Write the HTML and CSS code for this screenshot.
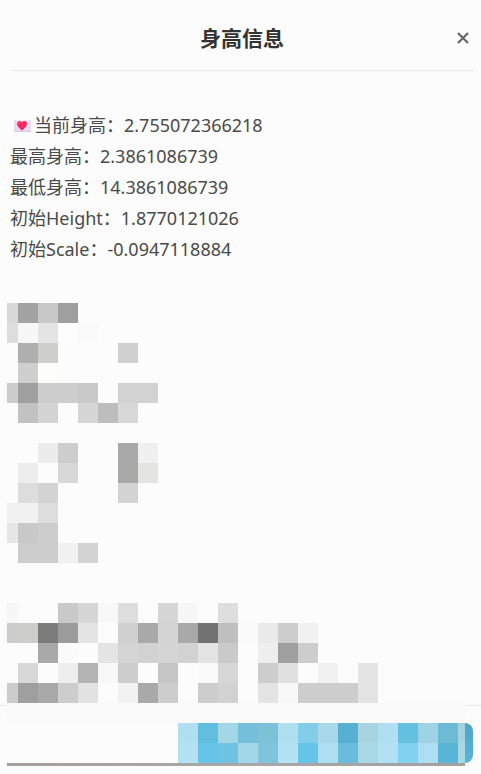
FILE: index.html
```html
<!DOCTYPE html>
<html lang="zh-CN">
<head>
    <meta charset="UTF-8">
    <meta name="viewport" content="width=device-width, initial-scale=1">
    <title>身高信息</title>
    <link rel="stylesheet" href="styles.css">
</head>
<body>
    <div class="dialog">
        <header class="dialog-header">
            <h1>身高信息</h1>
            <button type="button" class="close">
                <svg width="12" height="12" viewBox="0 0 12 12" aria-hidden="true">
                    <path d="M1 1L11 11M11 1L1 11" fill="none" stroke="#666" stroke-width="2.200"/>
                </svg>
            </button>
        </header>

        <main class="dialog-body">
            <div class="info">
                <p>
                    <svg class="letter" width="17" height="12" viewBox="0 0 17 12" aria-hidden="true">
                        <rect width="17" height="12" fill="#e6daf3"/>
                        <path d="M0 0H17L8.500 8Z" fill="#efe6f8"/>
                        <path d="M0 11.500H17" stroke="#d8c8e6"/>
                        <path d="M8 10.500C5 8 3 6 3 3.700C3 1 6.500 0 8 2.500C9.500 0 13 1 13 3.700C13 6 11 8 8 10.500Z" fill="#f8285f"/>
                        <path d="M4.500 3.500C4.700 2.400 5.600 2 6.400 2.500" fill="none" stroke="#ff7d9c"/>
                    </svg>
                    当前身高：2.755072366218
                </p>
                <p>最高身高：2.3861086739</p>
                <p>最低身高：14.3861086739</p>
                <p>初始Height：1.8770121026</p>
                <p>初始Scale：-0.0947118884</p>
            </div>

            <svg class="mosaic" data-name="first" aria-hidden="true"></svg>
            <svg class="mosaic" data-name="second" aria-hidden="true"></svg>
            <svg class="mosaic mosaic-last" data-name="third" aria-hidden="true"></svg>
        </main>

        <footer class="dialog-footer">
            <button type="button" class="confirm">
                <svg class="mosaic" data-name="button" aria-hidden="true"></svg>
            </button>
            <div class="bar"></div>
        </footer>
    </div>

    <script src="script.js"></script>
</body>
</html>
```
FILE: styles.css
```css
* {
    box-sizing: border-box;
}
body {
    margin: 0;
    background: #fcfcfc;
    color: #4a4a4a;
    font-family: "Noto Sans", "Noto Sans CJK SC", sans-serif;
}
button {
    padding: 0;
    border: none;
    background: none;
    cursor: pointer;
}
.dialog-header {
    position: relative;
    display: flex;
    align-items: center;
    justify-content: center;
    height: 71px;
    margin: 0 8px 0 11px;
    padding-top: 6px;
    border-bottom: 1px solid #e8e8e8;
}
h1 {
    margin: 0;
    color: #333;
    font-size: 21px;
    line-height: 30px;
    font-weight: 700;
}
.close {
    position: absolute;
    top: 32px;
    right: 4px;
    width: 12px;
    height: 12px;
}
.close svg {
    display: block;
}
.dialog-body {
    padding: 39px 7px 0;
}
.info {
    margin-bottom: 38px;
    padding-left: 3px;
    font-size: 18px;
    line-height: 31px;
}
.info p {
    display: flex;
    align-items: center;
    gap: 3px;
    height: 31px;
    margin: 0;
}
.letter {
    margin-left: 4px;
}
.mosaic {
    display: block;
    margin-bottom: 20px;
    shape-rendering: crispEdges;
}
.mosaic-last {
    margin: 40px 0 0;
}
.dialog-footer {
    position: relative;
    margin-top: 2px;
    padding: 17px 8px 8px 7px;
    border-top: 1px solid #e8e8e8;
}
/* covers the border line in the middle */
.dialog-footer::before {
    content: "";
    position: absolute;
    top: -3px;
    left: 7px;
    right: 16px;
    height: 20px;
    background: #fafafa;
}
.confirm {
    display: block;
    width: 295px;
    height: 40px;
    margin-left: auto;
    border-radius: 0 8px 8px 0;
    background: linear-gradient(#4da7c4, #57b5d7);
    overflow: hidden;
}
.confirm .mosaic {
    margin: 0;
}
.bar {
    height: 3px;
    margin-right: 8px;
    background: linear-gradient(to right, #a3a09f, #a9a8a8 50%, #a3a09f);
}
```
FILE: script.js
```js
const CELL = 20;

// first = width of the first column, '-' = empty cell
const mosaics = {
    first: {
        first: 11,
        rows: [
            'd8 a3 c8 9f',
            'dd f7 e4 fd fa',
            '- af cecfcc - - - d0',
            '- cf fdfdfa',
            'cc 9f cd cd c9 - d2 d2',
            '- c2 d3 - d6 bd d8'
        ]
    },
    second: {
        first: 11,
        rows: [
            '- - ec cd - - a9 f0',
            '- ed - d8 - - a9 e4e4e2',
            '- dd d3 - - - d3',
            'f1 f1 dd',
            'e6 c8 cd',
            '- cd cd f1 d3'
        ]
    },
    third: {
        first: 11,
        rows: [
            'f7 - - c9 d6 f8 de - d6 f7 - de',
            'cc cdcdca 7c 9b e4 - d0 a9 d4 a9 72 bf fa ea cd f1',
            '- - a9 fa - e4 d5 d2 d5 d2 e4 ca - ee 9f cd',
            '- d8 - ee b4 f8 cd - c6 - fa d7 - cd e0 - f1 - e4',
            'cc 9f a9 cd e2 - f2 a9 cd - cd d2 - e4 f8 cd cd cd e4'
        ]
    },
    button: {
        first: 20,
        width: 287,
        rows: [
            'afdff1 62bddf a2d7e6 74bfd9 7dc1d9 afdff1 82cde8 a8d8e8 57b0d1 a8d4e2 afdff0 64c0df 9dd3e5 6dbad5 a4d2e1',
            'b3e2f4 65c4e8 6fc2e1 a2d6e9 80c3dc b3e2f5 65c4e7 aedff0 6abdda a8d7e6 b1e1f3 82d1ee aedef1 59b5d8 a8d7e6'
        ]
    }
};

document.querySelectorAll('svg.mosaic').forEach(svg => {
    const { first, width, rows } = mosaics[svg.dataset.name];
    let right = 0;
    let html = '';

    rows.forEach((row, r) => {
        row.split(' ').forEach((code, c) => {
            const x = c === 0 ? 0 : first + (c - 1) * CELL;
            const w = c === 0 ? first : CELL;
            right = Math.max(right, x + w);
            if (code === '-') return;
            const color = code.length === 2 ? code.repeat(3) : code;
            html += `<rect x="${x}" y="${r * CELL}" width="${w}" height="${CELL}" fill="#${color}"/>`;
        });
    });

    svg.setAttribute('width', width || right);
    svg.setAttribute('height', rows.length * CELL);
    svg.innerHTML = html;
});
```
